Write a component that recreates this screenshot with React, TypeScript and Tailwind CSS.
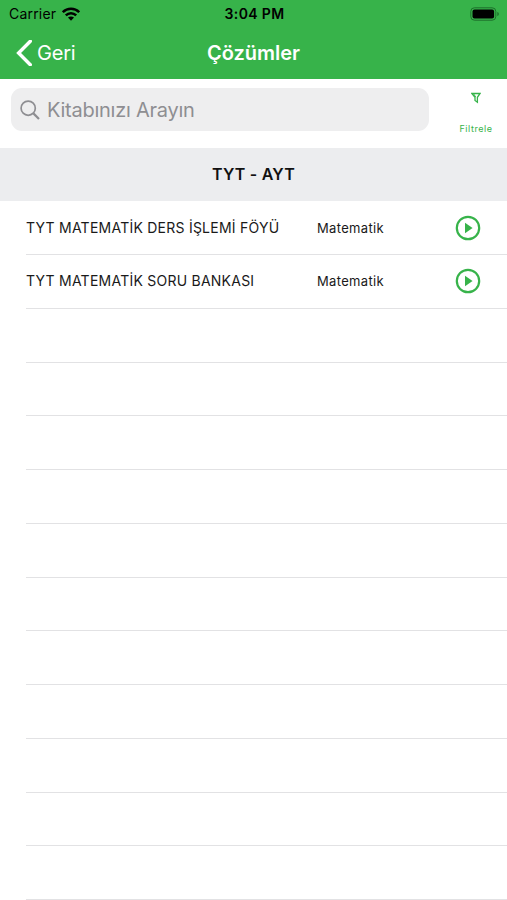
const books = [
    { title: "TYT MATEMATİK DERS İŞLEMİ FÖYÜ", lesson: "Matematik" },
    { title: "TYT MATEMATİK SORU BANKASI", lesson: "Matematik" },
];

const emptyRows = Array.from({ length: 11 });

const StatusBar = () => {
    return (
        <div className="grid h-[27px] grid-cols-3 items-center pl-[9px] pr-[7px] text-black">
            <div className="flex items-center gap-[6px]">
                <span className="text-[14px] leading-none tracking-[0.2px]">Carrier</span>
                <svg className="h-[14px] w-[18px]" viewBox="0 0 18 14" fill="none" stroke="currentColor" strokeWidth="2.5">
                    <path d="M0.8 5.2C5.3 0.6 12.7 0.6 17.2 5.2" />
                    <path d="M3.8 8.3C6.7 5.4 11.3 5.4 14.2 8.3" />
                    <path d="M9 13.7L6 10.6C7.7 9 10.3 9 12 10.6Z" fill="currentColor" stroke="none" />
                </svg>
            </div>
            <span className="text-center text-[14px] font-semibold leading-none tracking-[0.35px]">3:04 PM</span>
            <svg className="h-[14px] w-[30px] justify-self-end" viewBox="0 0 30 14">
                <rect x="0.8" y="0.8" width="25" height="12.4" rx="3.6" fill="none" stroke="#1d6f2b" strokeWidth="1" />
                <rect x="2.5" y="2.5" width="21.6" height="9" rx="2" fill="#000" />
                <path d="M27.3 5C29.3 5.6 29.3 8.4 27.3 9Z" fill="#1d6f2b" />
            </svg>
        </div>
    )
}

const NavBar = () => {
    return (
        <div className="grid h-[52px] grid-cols-3 items-center px-4 text-white">
            <button className="flex items-center gap-[5px] text-left">
                <svg className="h-[26px] w-[16px]" viewBox="0 0 16 26" fill="none" stroke="currentColor" strokeWidth="3.4">
                    <path d="M14.3 1.3L2.6 13L14.3 24.7" strokeLinecap="round" />
                </svg>
                <span className="text-[20px] leading-none tracking-[-0.2px]">Geri</span>
            </button>
            <h1 className="text-center text-[20px] font-semibold leading-none">Çözümler</h1>
        </div>
    )
}

const SearchBar = () => {
    return (
        <div className="flex h-[69px] items-start pl-[11px] pt-[9px]">
            <div className="flex h-[43px] w-[418px] items-center gap-[7px] rounded-[11px] bg-[#eeeeef] pl-[9px] text-[#8e8e92]">
                <svg className="h-[20px] w-[20px]" viewBox="0 0 20 20" fill="none" stroke="currentColor">
                    <circle cx="8.2" cy="8.2" r="7.1" strokeWidth="1.7" />
                    <path d="M13.4 13.4L19 19" strokeWidth="2.2" />
                </svg>
                <span className="text-[20px] leading-none tracking-[-0.25px]">Kitabınızı Arayın</span>
            </div>
            <button className="ml-[17px] flex w-[60px] flex-col items-center pt-[4px] text-[#37b34a]">
                <svg className="h-[12px] w-[10px]" viewBox="0 0 10 12" fill="none" stroke="currentColor" strokeWidth="1.3">
                    <path d="M0.9 1.5H9.1L6.4 5.3V10.3L4 8.5V5.3Z" />
                    <path d="M3 2.2L4.6 5" strokeWidth="1" />
                </svg>
                <span className="mt-[19px] text-[9px] leading-[11px] tracking-[0.55px]">Filtrele</span>
            </button>
        </div>
    )
}

const PlayIcon = () => {
    return (
        <svg className="h-[26px] w-[26px]" viewBox="0 0 26 26">
            <circle cx="13" cy="13" r="11.2" fill="none" stroke="#37b34a" strokeWidth="2.2" />
            <path d="M10 7.8L17.6 13L10 18.2Z" fill="#37b34a" />
        </svg>
    )
}

const App = () => {
    return (
        <div className="flex h-[900px] w-full flex-col overflow-hidden bg-white font-['Inter','Noto_Sans',sans-serif]">
            <header className="bg-[#37b34a]">
                <StatusBar />
                <NavBar />
            </header>
            <SearchBar />
            <h2 className="flex h-[53px] shrink-0 items-center justify-center bg-[#ecedef] text-[16px] font-semibold tracking-[0.2px] text-[#111]">TYT - AYT</h2>
            <ul className="pl-[26px] pt-[0.7px]">
                {books.map((book) => (
                    <li key={book.title} className="flex h-[53.75px] items-center border-b border-[#e2e2e4] text-[#1a1a1a]">
                        <span className="w-[291px] whitespace-nowrap text-[14px] leading-[18px] tracking-[0.24px]">{book.title}</span>
                        <span className="w-[138px] text-[13px] leading-[18px] tracking-[0.33px]">{book.lesson}</span>
                        <PlayIcon />
                    </li>
                ))}
                {emptyRows.map((_, i) => (
                    <li key={i} className="h-[53.75px] border-b border-[#e2e2e4]"></li>
                ))}
            </ul>
        </div>
    )
}

export default App;
